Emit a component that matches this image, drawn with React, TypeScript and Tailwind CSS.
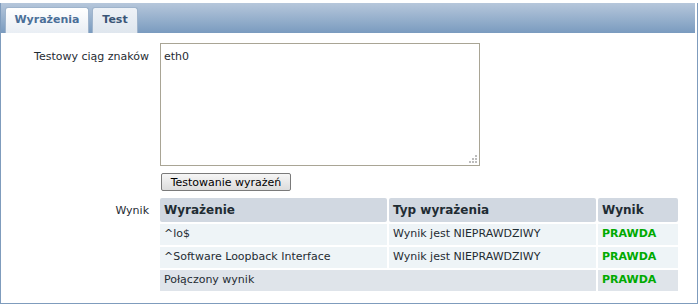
import React from 'react';

const rows = [
  { expr: '^lo$', type: 'Wynik jest NIEPRAWDZIWY', result: 'PRAWDA' },
  { expr: '^Software Loopback Interface', type: 'Wynik jest NIEPRAWDZIWY', result: 'PRAWDA' },
];

export default function App() {
  return (
    <div className="w-[699px] h-[306px] bg-white pt-[3px] text-[11px] text-[#1f2c33]" style={{ fontFamily: '"DejaVu Sans", Verdana, sans-serif' }}>
      <div className="w-[698px] h-[301px] border border-[#7f9cbd] border-t-0 flex flex-col">
        {/* tab bar */}
        <div className="h-[30px] mr-[2px] bg-gradient-to-b from-[#b6c7db] to-[#7a9bbf] flex items-end gap-[3px] pl-[4px]">
          <div className="h-[26px] w-[84px] rounded-t-[3px] border border-b-0 border-[#9fb4cc] bg-gradient-to-b from-[#ffffff] to-[#e9eef4] flex items-center justify-center font-bold text-[11px] text-[#4b6f98]">
            Wyrażenia
          </div>
          <div className="h-[26px] w-[46px] rounded-t-[3px] border border-b-0 border-[#9fb4cc] bg-gradient-to-b from-[#eef2f7] to-[#dfe6ee] flex items-center justify-center font-bold text-[11px] text-[#3a5577]">
            Test
          </div>
        </div>

        <div className="flex pt-[10px]">
          <div className="w-[150px] pr-[2px] text-right pt-[6px]">Testowy ciąg znaków</div>
          <div className="pl-[9px] flex flex-col">
            <div className="relative w-[320px] h-[123px] border border-[#a9a595] bg-white px-[3px] py-[5px]">
              eth0
              <svg className="absolute right-[1px] bottom-[1px]" width="9" height="9" viewBox="0 0 9 9">
                <rect x="6" y="0" width="2" height="2" fill="#bdbdbd" />
                <rect x="3" y="3" width="2" height="2" fill="#bdbdbd" />
                <rect x="6" y="3" width="2" height="2" fill="#bdbdbd" />
                <rect x="0" y="6" width="2" height="2" fill="#bdbdbd" />
                <rect x="3" y="6" width="2" height="2" fill="#bdbdbd" />
                <rect x="6" y="6" width="2" height="2" fill="#bdbdbd" />
              </svg>
            </div>
            <button className="mt-[7px] ml-[1px] w-[130px] h-[18px] border border-[#7a7a7a] rounded-[2px] bg-gradient-to-b from-[#f6f6f6] to-[#dcdcdc] text-[11px] text-black leading-none" style={{ fontFamily: '"DejaVu Sans", Verdana, sans-serif' }}>
              Testowanie wyrażeń
            </button>
          </div>
        </div>

        <div className="flex mt-[5px]">
          <div className="w-[150px] pr-[2px] text-right pt-[7px]">Wynik</div>
          <div className="pl-[7px]">
            <table className="border-separate border-spacing-[2px]">
              <thead>
                <tr className="h-[24px] text-[12px] font-bold text-left">
                  <th className="w-[227px] bg-[#d1d8e1] rounded-[2px] px-[4px]">Wyrażenie</th>
                  <th className="w-[207px] bg-[#d1d8e1] rounded-[2px] px-[4px]">Typ wyrażenia</th>
                  <th className="w-[80px] bg-[#d1d8e1] rounded-[2px] px-[4px]">Wynik</th>
                </tr>
              </thead>
              <tbody>
                {rows.map(r => (
                  <tr key={r.expr} className="h-[21px]">
                    <td className="bg-[#eef4f7] px-[4px]">{r.expr}</td>
                    <td className="bg-[#eef4f7] px-[4px]">{r.type}</td>
                    <td className="bg-[#eef4f7] px-[4px] font-bold text-[#00aa00]">{r.result}</td>
                  </tr>
                ))}
                <tr className="h-[21px]">
                  <td colSpan={2} className="bg-[#dfe4ea] px-[4px]">Połączony wynik</td>
                  <td className="bg-[#dfe4ea] px-[4px] font-bold text-[#00aa00]">PRAWDA</td>
                </tr>
              </tbody>
            </table>
          </div>
        </div>
      </div>
    </div>
  );
}
